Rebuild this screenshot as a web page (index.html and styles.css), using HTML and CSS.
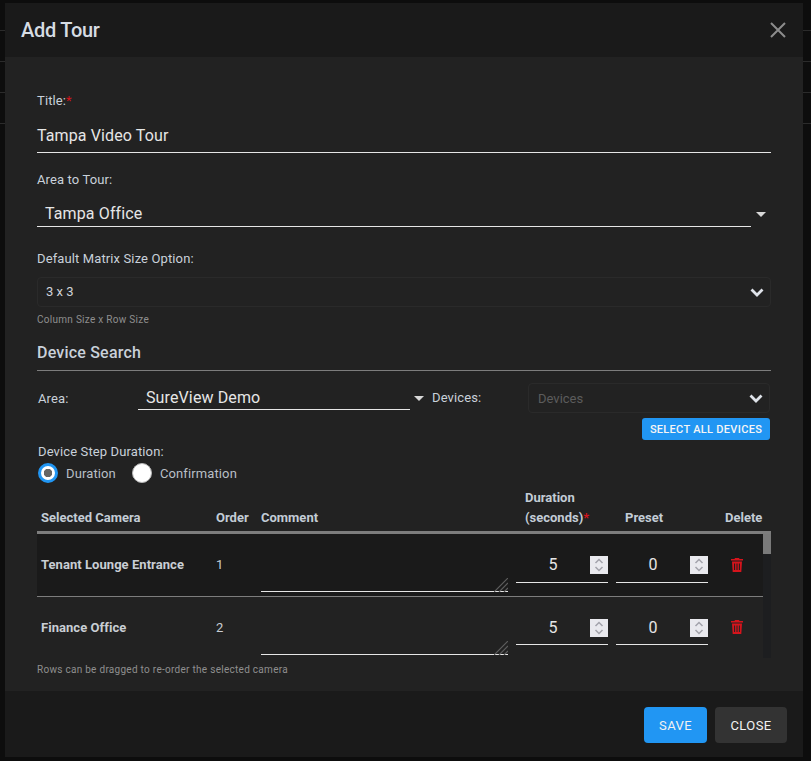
FILE: index.html
```html
<!DOCTYPE html>
<html lang="en">
<head>
    <meta charset="UTF-8">
    <meta name="viewport" content="width=device-width, initial-scale=1.0">
    <title>Add Tour</title>
    <link rel="stylesheet" href="styles.css">
</head>
<body>
    <div class="modal">
        <header class="modal-header">
            <h1>Add Tour</h1>
            <button class="close-x" type="button" aria-label="Close">
                <svg width="16" height="16" viewBox="0 0 16 16"><path d="M1 1 L15 15 M15 1 L1 15" stroke="#8c8c8c" stroke-width="2" fill="none"/></svg>
            </button>
        </header>

        <div class="modal-body">
            <label class="field-label title-label">Title:<span class="req">*</span></label>
            <div class="text-field">Tampa Video Tour</div>

            <label class="field-label area-label">Area to Tour:</label>
            <div class="combo tour-area">
                <div class="combo-value">Tampa Office</div>
                <svg class="caret" width="10" height="5" viewBox="0 0 10 5"><path d="M0 0 H10 L5 5 Z" fill="#d8d8d8"/></svg>
            </div>

            <label class="field-label matrix-label">Default Matrix Size Option:</label>
            <div class="select-box matrix-box">
                <span>3 x 3</span>
                <svg class="chevron" width="14" height="9" viewBox="0 0 14 9"><path d="M1.5 1.5 L7 7 L12.5 1.5" stroke="#dfe3ea" stroke-width="2.8" fill="none"/></svg>
            </div>
            <div class="hint">Column Size x Row Size</div>

            <h2 class="section-title">Device Search</h2>

            <div class="search-row">
                <label class="field-label area-col">Area:</label>
                <div class="combo search-area">
                    <div class="combo-value">SureView Demo</div>
                    <svg class="caret" width="10" height="5" viewBox="0 0 10 5"><path d="M0 0 H10 L5 5 Z" fill="#d8d8d8"/></svg>
                </div>
                <label class="field-label devices-col">Devices:</label>
                <div class="select-box devices-box">
                    <span class="placeholder">Devices</span>
                    <svg class="chevron" width="14" height="9" viewBox="0 0 14 9"><path d="M1.5 1.5 L7 7 L12.5 1.5" stroke="#dfe3ea" stroke-width="2.8" fill="none"/></svg>
                </div>
            </div>
            <div class="select-all-row">
                <button class="btn-small" type="button">SELECT ALL DEVICES</button>
            </div>

            <div class="step-block">
                <label class="field-label">Device Step Duration:</label>
                <div class="radios">
                    <span class="radio checked"></span><span class="radio-text">Duration</span>
                    <span class="radio"></span><span class="radio-text">Confirmation</span>
                </div>
            </div>

            <div class="table-head row-grid">
                <div>Selected Camera</div>
                <div>Order</div>
                <div>Comment</div>
                <div class="head-pad">Duration<br>(seconds)<span class="req">*</span></div>
                <div class="head-pad">Preset</div>
                <div class="head-pad">Delete</div>
            </div>

            <div class="table-wrap">
                <div class="table-rows">
                    <div class="row-grid table-row dark">
                        <div class="cam-name">Tenant Lounge Entrance</div>
                        <div class="order">1</div>
                        <div class="comment-wrap">
                            <textarea class="comment"></textarea>
                            <svg class="grip" width="14" height="14" viewBox="0 0 14 14"><path d="M0 14 L14 0 M5 14 L14 5 M10 14 L14 10" stroke="#5e5e5e" stroke-width="1.2" fill="none"/></svg>
                        </div>
                        <div class="num-field">
                            <input class="num" type="number" value="5">
                            <svg class="spinner" width="18" height="18" viewBox="0 0 18 18"><rect width="18" height="18" fill="#e9e9ee"/><path d="M5.5 7 L9 3.5 L12.5 7 M5.5 11 L9 14.5 L12.5 11" stroke="#a3a3ab" stroke-width="1.5" fill="none"/></svg>
                        </div>
                        <div class="num-field">
                            <input class="num" type="number" value="0">
                            <svg class="spinner" width="18" height="18" viewBox="0 0 18 18"><rect width="18" height="18" fill="#e9e9ee"/><path d="M5.5 7 L9 3.5 L12.5 7 M5.5 11 L9 14.5 L12.5 11" stroke="#a3a3ab" stroke-width="1.5" fill="none"/></svg>
                        </div>
                        <svg class="trash" width="12" height="14" viewBox="0 0 12 14"><path d="M4 0 H8 L8.5 1 H12 V2.5 H0 V1 H3.5 Z M1 3.5 H11 L10.3 14 H1.7 Z" fill="#d5141c"/><path d="M3.6 5.5 V12 M6 5.5 V12 M8.4 5.5 V12" stroke="#1a1a1a" stroke-width="1"/></svg>
                    </div>
                    <div class="row-grid table-row">
                        <div class="cam-name">Finance Office</div>
                        <div class="order">2</div>
                        <div class="comment-wrap">
                            <textarea class="comment"></textarea>
                            <svg class="grip" width="14" height="14" viewBox="0 0 14 14"><path d="M0 14 L14 0 M5 14 L14 5 M10 14 L14 10" stroke="#5e5e5e" stroke-width="1.2" fill="none"/></svg>
                        </div>
                        <div class="num-field">
                            <input class="num" type="number" value="5">
                            <svg class="spinner" width="18" height="18" viewBox="0 0 18 18"><rect width="18" height="18" fill="#e9e9ee"/><path d="M5.5 7 L9 3.5 L12.5 7 M5.5 11 L9 14.5 L12.5 11" stroke="#a3a3ab" stroke-width="1.5" fill="none"/></svg>
                        </div>
                        <div class="num-field">
                            <input class="num" type="number" value="0">
                            <svg class="spinner" width="18" height="18" viewBox="0 0 18 18"><rect width="18" height="18" fill="#e9e9ee"/><path d="M5.5 7 L9 3.5 L12.5 7 M5.5 11 L9 14.5 L12.5 11" stroke="#a3a3ab" stroke-width="1.5" fill="none"/></svg>
                        </div>
                        <svg class="trash" width="12" height="14" viewBox="0 0 12 14"><path d="M4 0 H8 L8.5 1 H12 V2.5 H0 V1 H3.5 Z M1 3.5 H11 L10.3 14 H1.7 Z" fill="#d5141c"/><path d="M3.6 5.5 V12 M6 5.5 V12 M8.4 5.5 V12" stroke="#222222" stroke-width="1"/></svg>
                    </div>
                </div>
                <div class="scrollbar"><div class="thumb"></div></div>
            </div>
            <div class="hint drag-hint">Rows can be dragged to re-order the selected camera</div>
        </div>

        <footer class="modal-footer">
            <button class="btn btn-save" type="button">SAVE</button>
            <button class="btn btn-close" type="button">CLOSE</button>
        </footer>
    </div>
</body>
</html>
```
FILE: styles.css
```css
* {
    box-sizing: border-box;
}
html, body {
    height: 100%;
}
body {
    margin: 0;
    padding: 3px 8px 4px 5px;
    font-family: Roboto, sans-serif;
    color: #d6dbe1;
    overflow: hidden;
    background-color: #0d0d0d;
    background-image: repeating-linear-gradient(to bottom, #0d0d0d 0, #0d0d0d 30px, #2b2b2b 30px, #2b2b2b 31px);
    background-size: 100% 125px;
    background-repeat: no-repeat;
}
.modal {
    height: 754px;
    display: flex;
    flex-direction: column;
    background: #1a1a1a;
}
.modal-header {
    height: 54px;
    flex: none;
    display: flex;
    align-items: center;
    justify-content: space-between;
    padding: 0 17px 0 16px;
}
.modal-header h1 {
    margin: 0;
    font-size: 20px;
    font-weight: 500;
    letter-spacing: -0.25px;
    color: #d6dce3;
}
.close-x {
    background: none;
    border: none;
    padding: 0;
    display: flex;
}
.modal-body {
    height: 634px;
    flex: none;
    background: #222;
    padding: 36px 32px 0;
}
.field-label {
    display: block;
    font-size: 13px;
    line-height: 16px;
    letter-spacing: 0.12px;
    color: #c9d1da;
}
.req {
    color: #d5141c;
}
.text-field {
    height: 35px;
    margin-top: 9px;
    padding: 8px 0 0;
    font-size: 16px;
    line-height: 20px;
    letter-spacing: 0.12px;
    color: #e6e6e6;
    border-bottom: 1px solid #e6e6e6;
}
.area-label {
    margin-top: 19px;
}
.combo {
    display: flex;
    align-items: center;
    gap: 5px;
}
.combo-value {
    flex: 1;
    padding-left: 8px;
    font-size: 16px;
    letter-spacing: 0.12px;
    color: #e6e6e6;
    border-bottom: 1px solid #e6e6e6;
}
.tour-area {
    margin-top: 8px;
    height: 31px;
}
.tour-area .combo-value {
    height: 31px;
    line-height: 35px;
}
.tour-area .caret {
    margin: 6px 5px 0 0;
}
.matrix-label {
    margin-top: 24px;
}
.select-box {
    display: flex;
    align-items: center;
    justify-content: space-between;
    border: 1px solid #2a2a2a;
    border-radius: 4px;
    font-size: 13px;
    padding: 0 6px 0 8px;
}
.matrix-box {
    height: 30px;
    margin-top: 10px;
    color: #d0d4da;
}
.matrix-box span {
    margin-bottom: 2px;
}
.hint {
    font-size: 10px;
    line-height: 12px;
    color: #8f8f8f;
    letter-spacing: 0.28px;
}
.matrix-box + .hint {
    margin-top: 7px;
}
.section-title {
    margin: 17px 0 0;
    height: 28px;
    font-size: 16px;
    font-weight: 500;
    line-height: 20px;
    letter-spacing: 0.2px;
    color: #c9d1da;
    border-bottom: 1px solid #7d7d7d;
}
.search-row {
    display: flex;
    align-items: center;
    margin-top: 12px;
    height: 30px;
    padding-right: 1px;
}
.area-col {
    width: 101px;
    padding-left: 1px;
    margin-top: 2px;
}
.search-area {
    width: 294px;
    gap: 4px;
}
.search-area .caret {
    margin-right: 8px;
}
.search-area .combo-value {
    height: 24px;
    line-height: 23px;
}
.devices-col {
    width: 96px;
}
.devices-box {
    flex: 1;
    height: 30px;
    padding-left: 9px;
}
.placeholder {
    color: #5c5c5c;
}
.select-all-row {
    display: flex;
    justify-content: flex-end;
    margin-top: 5px;
    padding-right: 1px;
}
.btn-small {
    width: 128px;
    height: 22px;
    padding: 0;
    border: none;
    border-radius: 3px;
    background: #2196f3;
    color: #f5f5f5;
    font: 500 11px Roboto, sans-serif;
    letter-spacing: 0.3px;
}
.step-block {
    margin-top: 4px;
    padding-left: 1px;
}
.radios {
    display: flex;
    align-items: center;
    margin-top: 3px;
    height: 20px;
}
.radio {
    width: 20px;
    height: 20px;
    border-radius: 50%;
    background: #fff;
    border: 1px solid #b8b8b8;
    flex: none;
}
.radio.checked {
    border: 3px solid #2196f3;
    background: radial-gradient(circle, #666 0, #666 4px, #fff 4.5px);
}
.radio-text {
    font-size: 13px;
    letter-spacing: 0.12px;
    color: #b9bfc6;
    margin: 0 16px 0 8px;
}
.row-grid {
    display: grid;
    grid-template-columns: 175px 45px 255px 100px 100px 1fr;
    align-items: center;
}
.table-head {
    margin-top: 4px;
    height: 47px;
    padding-left: 4px;
    font-size: 13px;
    font-weight: 700;
    line-height: 20px;
    color: #c3ccd6;
    align-items: end;
    padding-bottom: 3px;
    border-bottom: 3px solid #7d7d7d;
}
.head-pad {
    padding-left: 9px;
}
.table-wrap {
    display: flex;
    height: 124px;
}
.table-rows {
    flex: 1;
}
.table-row {
    height: 60px;
    padding-left: 4px;
    font-size: 13px;
    color: #c9ced4;
}
.table-row.dark {
    height: 63px;
    background: #1a1a1a;
    border-bottom: 1px solid #7d7d7d;
}
.dark .cam-name, .dark .order {
    margin-bottom: 2px;
}
.cam-name {
    font-weight: 700;
    letter-spacing: 0.05px;
}
.comment-wrap {
    position: relative;
    width: 247px;
    height: 56px;
}
.dark .comment-wrap {
    height: 54px;
}
.comment {
    width: 100%;
    height: 100%;
    resize: none;
    background: transparent;
    border: none;
    border-bottom: 1px solid #e6e6e6;
    outline: none;
    color: #e6e6e6;
    display: block;
}
.grip {
    position: absolute;
    right: 0;
    bottom: 0;
}
.num-field {
    width: 92px;
    height: 36px;
    display: flex;
    align-items: flex-start;
    border-bottom: 1px solid #e6e6e6;
}
.num {
    flex: 1;
    min-width: 0;
    height: 35px;
    background: transparent;
    border: none;
    color: #e6e6e6;
    font: 16px Roboto, sans-serif;
    text-align: center;
    padding: 2px 0 0;
    outline: none;
    -moz-appearance: textfield;
}
.dark .num {
    padding: 0;
}
.num::-webkit-inner-spin-button {
    -webkit-appearance: none;
    display: none;
}
.spinner {
    flex: none;
    margin-top: 10px;
}
.dark .spinner {
    margin-top: 9px;
}
.trash {
    margin-left: 15px;
}
.scrollbar {
    width: 8px;
    background: #1d1e20;
}
.thumb {
    height: 20px;
    background: #7a7a7a;
}
.drag-hint {
    margin-top: 6px;
}
.modal-footer {
    flex: 1;
    display: flex;
    justify-content: flex-end;
    align-items: center;
    gap: 8px;
    padding: 2px 16px 0 0;
}
.btn {
    height: 36px;
    border: none;
    border-radius: 4px;
    color: #f2f2f2;
    font: 400 13px Roboto, sans-serif;
    letter-spacing: 0.4px;
}
.btn-save {
    width: 63px;
    background: #2196f3;
}
.btn-close {
    width: 72px;
    background: #333;
}
```
